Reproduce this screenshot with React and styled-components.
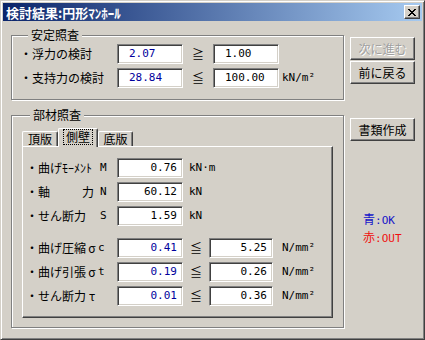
import React from "react"
import styled, { createGlobalStyle, css } from "styled-components"

const GlobalStyle = createGlobalStyle`
  html, body {
    margin: 0;
    padding: 0;
    background: #d4d0c8;
  }
  body {
    width: 425px;
    height: 340px;
    overflow: hidden;
    font-family: "Noto Sans CJK JP", sans-serif;
    font-size: 12px;
    color: #000;
  }
`

const raised = css`
  border: 1px solid;
  border-color: #ffffff #404040 #404040 #ffffff;
  box-shadow: inset -1px -1px 0 #808080;
`

const sunken = css`
  border: 1px solid;
  border-color: #808080 #ffffff #ffffff #808080;
  box-shadow: inset 1px 1px 0 #404040, inset -1px -1px 0 #d4d0c8;
`

const Window = styled.div`
  box-sizing: border-box;
  width: 425px;
  height: 340px;
  padding: 2px;
  background: #d4d0c8;
  border: 1px solid;
  border-color: #d4d0c8 #404040 #404040 #d4d0c8;
  box-shadow: inset 1px 1px 0 #ffffff, inset -1px -1px 0 #808080;
`

const TitleBar = styled.div`
  display: flex;
  align-items: center;
  justify-content: space-between;
  height: 18px;
  padding: 0 2px 0 3px;
  background: linear-gradient(to right, #0a246a, #a6caf0);
`

const Title = styled.span`
  color: #ffffff;
  font-weight: bold;
  font-size: 13px;
  line-height: 15px;
`

const CloseButton = styled.div`
  box-sizing: border-box;
  width: 16px;
  height: 14px;
  background: #d4d0c8;
  display: flex;
  align-items: center;
  justify-content: center;
  ${raised};
`

const Client = styled.div`
  display: flex;
  gap: 6px;
  padding: 7px 7px 0 8px;
`

const Main = styled.div`
  width: 333px;
  display: flex;
  flex-direction: column;
  gap: 8px;
`

const Group = styled.fieldset`
  margin: 0;
  padding: ${(p) => p.$pad};
  min-width: 0;
  border: 1px solid #808080;
  box-shadow: 1px 1px 0 #ffffff, inset 1px 1px 0 #ffffff;
`

const Legend = styled.legend`
  margin-left: 8px;
  padding: 0 3px;
  font-size: 12px;
  line-height: 14px;
  background: #d4d0c8;
`

const Rows = styled.div`
  display: flex;
  flex-direction: column;
  gap: 4px;
`

const Row = styled.div`
  display: grid;
  grid-template-columns: ${(p) => p.$cols};
  align-items: center;
  height: 20px;
  margin-top: ${(p) => (p.$break ? "8px" : "0")};
`

const Label = styled.div`
  display: flex;
  align-items: center;
  line-height: 14px;
  white-space: nowrap;
`

const Bullet = styled.span`
  width: 12px;
`

const Name = styled.span`
  display: flex;
  justify-content: ${(p) => (p.$spread ? "space-between" : "flex-start")};
  box-sizing: border-box;
  width: ${(p) => (p.$w ? p.$w + "px" : "auto")};
  padding-right: ${(p) => (p.$spread ? "6px" : "0")};
`

const Greek = styled.span`
  display: inline-block;
  width: 12px;
  text-align: center;
`

const Mono = styled.span`
  font-family: "DejaVu Sans Mono", "Liberation Mono", monospace;
  font-size: 11px;
  line-height: 14px;
`

const Field = styled.div`
  box-sizing: border-box;
  height: 20px;
  background: #ffffff;
  ${sunken};
  font-family: "DejaVu Sans Mono", "Liberation Mono", monospace;
  font-size: 11px;
  line-height: 18px;
  color: ${(p) => (p.$blue ? "#00009c" : "#000000")};
  text-align: ${(p) => (p.$right ? "right" : "left")};
  padding: ${(p) => (p.$right ? "0 5px 0 0" : "0 0 0 11px")};
`

const Sym = styled.span`
  text-align: center;
  line-height: 14px;
`

const Unit = styled(Mono)`
  padding-left: ${(p) => p.$pl}px;
  grid-column: ${(p) => (p.$span ? "3 / -1" : "auto")};
`

const TabStrip = styled.div`
  display: flex;
  align-items: flex-end;
  height: 18px;
`

const Tab = styled.div`
  box-sizing: border-box;
  position: relative;
  width: ${(p) => p.$w}px;
  height: ${(p) => (p.$active ? "19px" : "15px")};
  margin-bottom: ${(p) => (p.$active ? "-1px" : "0")};
  z-index: ${(p) => (p.$active ? 1 : 0)};
  background: #d4d0c8;
  border-top: 1px solid #ffffff;
  border-left: 1px solid #ffffff;
  border-right: 1px solid #404040;
  border-radius: 2px 2px 0 0;
  box-shadow: inset -1px 0 0 #808080;
  display: flex;
  justify-content: center;
  padding-top: ${(p) => (p.$active ? "1px" : "0")};
  line-height: 14px;
`

const TabText = styled.span`
  padding: 0 2px;
  height: 14px;
  outline: ${(p) => (p.$focus ? "1px dotted #000" : "none")};
`

const Panel = styled.div`
  box-sizing: border-box;
  height: 172px;
  padding: 11px 0 11px 3px;
  ${raised};
`

const Side = styled.div`
  width: 65px;
  margin-top: 9px;
  display: flex;
  flex-direction: column;
`

const Button = styled.button`
  box-sizing: border-box;
  width: 65px;
  height: 23px;
  margin-top: ${(p) => p.$mt || 0}px;
  padding: 0;
  background: #d4d0c8;
  ${raised};
  font-family: "Noto Sans CJK JP", sans-serif;
  font-size: 12px;
  line-height: 14px;
  color: #000;
  &:disabled {
    color: #a0a0a0;
    text-shadow: 1px 1px 0 #ffffff;
  }
`

const Key = styled.div`
  margin-top: ${(p) => p.$mt || 0}px;
  padding-left: 13px;
  line-height: 17px;
  color: ${(p) => p.$color};
  white-space: nowrap;
`

const G1_COLS = "97px 66px 30px 66px auto"
const P_COLS = "91px 66px 26px 64px auto"

const stability = [
  { name: "浮力の検討", value: "2.07", sym: "≧", limit: "1.00", unit: "" },
  { name: "支持力の検討", value: "28.84", sym: "≦", limit: "100.00", unit: "kN/m²" },
]

const forces = [
  { name: "曲げﾓｰﾒﾝﾄ", sym: "M", value: "0.76", unit: "kN·m" },
  { name: "軸,力", sym: "N", value: "60.12", unit: "kN", spread: true },
  { name: "せん断力", sym: "S", value: "1.59", unit: "kN" },
]

const stresses = [
  { name: "曲げ圧縮", greek: "σ", sym: "c", value: "0.41", limit: "5.25" },
  { name: "曲げ引張", greek: "σ", sym: "t", value: "0.19", limit: "0.26" },
  { name: "せん断力", greek: "τ", sym: "", value: "0.01", limit: "0.36" },
]

const App = () => {
  return (
    <>
      <GlobalStyle />
      <Window>
        <TitleBar>
          <Title>検討結果:円形ﾏﾝﾎｰﾙ</Title>
          <CloseButton>
            <svg width="8" height="7" viewBox="0 0 8 7">
              <path d="M0 0 L7 7 M1 0 L8 7 M7 0 L0 7 M8 0 L1 7" stroke="#000" strokeWidth="1" />
            </svg>
          </CloseButton>
        </TitleBar>
        <Client>
          <Main>
            <Group $pad="2px 0 11px 8px">
              <Legend>安定照査</Legend>
              <Rows>
                {stability.map((r) => (
                  <Row key={r.name} $cols={G1_COLS}>
                    <Label>
                      <Bullet>・</Bullet>
                      <Name>{r.name}</Name>
                    </Label>
                    <Field $blue>{r.value}</Field>
                    <Sym>{r.sym}</Sym>
                    <Field>{r.limit}</Field>
                    <Unit $pl={3}>{r.unit}</Unit>
                  </Row>
                ))}
              </Rows>
            </Group>
            <Group $pad="6px 10px 9px 10px">
              <Legend>部材照査</Legend>
              <TabStrip>
                <Tab $w={36}>
                  <TabText>頂版</TabText>
                </Tab>
                <Tab $w={40} $active>
                  <TabText $focus>側壁</TabText>
                </Tab>
                <Tab $w={35}>
                  <TabText>底版</TabText>
                </Tab>
              </TabStrip>
              <Panel>
                <Rows>
                  {forces.map((r) => (
                    <Row key={r.sym} $cols={P_COLS}>
                      <Label>
                        <Bullet>・</Bullet>
                        <Name $w={62} $spread={r.spread}>
                          {r.name.split(",").map((part) => (
                            <span key={part}>{part}</span>
                          ))}
                        </Name>
                        <Mono>{r.sym}</Mono>
                      </Label>
                      <Field $right>{r.value}</Field>
                      <Unit $pl={6} $span>
                        {r.unit}
                      </Unit>
                    </Row>
                  ))}
                  {stresses.map((r, i) => (
                    <Row key={r.value} $cols={P_COLS} $break={i === 0}>
                      <Label>
                        <Bullet>・</Bullet>
                        <Name>{r.name}</Name>
                        <Greek>{r.greek}</Greek>
                        <Mono>{r.sym}</Mono>
                      </Label>
                      <Field $right $blue>
                        {r.value}
                      </Field>
                      <Sym>≦</Sym>
                      <Field $right>{r.limit}</Field>
                      <Unit $pl={9}>N/mm²</Unit>
                    </Row>
                  ))}
                </Rows>
              </Panel>
            </Group>
          </Main>
          <Side>
            <Button disabled>次に進む</Button>
            <Button $mt={1}>前に戻る</Button>
            <Button $mt={34}>書類作成</Button>
            <Key $mt={69} $color="#1414c8">
              青<Mono>:OK</Mono>
            </Key>
            <Key $color="#f01010">
              赤<Mono>:OUT</Mono>
            </Key>
          </Side>
        </Client>
      </Window>
    </>
  )
}

export default App
